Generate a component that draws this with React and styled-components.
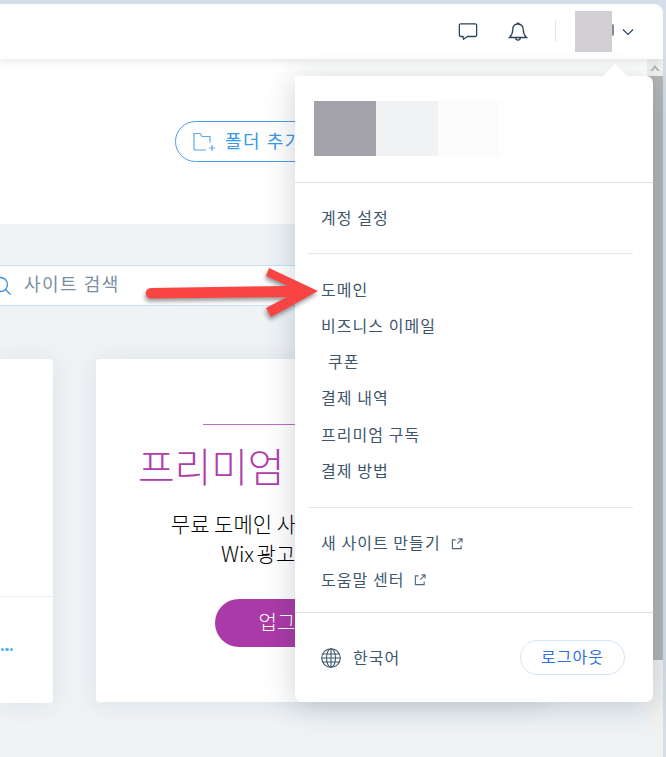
import React from "react";
import styled, { createGlobalStyle } from "styled-components";

const Global = createGlobalStyle`
  html, body { margin: 0; padding: 0; }
  * { box-sizing: border-box; }
  body { font-family: "Noto Sans CJK KR", "Noto Sans", sans-serif; }
`;

const Page = styled.div`
  position: relative; width: 666px; height: 757px; overflow: hidden;
  background: #d3dee8; padding: 4px 3px 0 0;
`;
const Win = styled.div`
  height: 753px; display: flex; flex-direction: column; background: #fff;
  border-top-right-radius: 9px; overflow: hidden;
`;
const TopBar = styled.header`
  position: relative; z-index: 2; height: 55px; flex: none; background: #fff;
  display: flex; align-items: center; justify-content: flex-end;
  box-shadow: 0 2px 8px rgba(22,45,61,.12);
`;
const IconBtn = styled.button`
  width: 24px; height: 24px; padding: 0; border: 0; background: none; display: flex;
  align-items: center; justify-content: center; margin-right: ${p => p.$mr}px; color: #2b4358;
`;
const VDiv = styled.span`width: 1px; height: 21px; background: #dfe5eb; margin-right: 19px;`;
const Avatar = styled.div`
  position: relative; width: 37px; height: 41px; background: #d3d0d5; margin-right: 10px;
  &::after {
    content: ""; position: absolute; right: -2px; top: 13px; width: 2px; height: 12px;
    border-radius: 0 6px 6px 0; background: #8a8a96;
  }
`;
const Chevron = styled.svg`width: 12px; height: 8px; margin-right: 29px;`;
const Body = styled.div`flex: 1; min-height: 0; display: flex;`;
const Main = styled.main`flex: 1; min-width: 0; overflow: hidden; display: flex; flex-direction: column;`;
const Hero = styled.section`height: 165px; flex: none; background: #fff; padding: 62px 0 0 175px;`;
const FolderBtn = styled.button`
  height: 41px; width: 190px; border: 1px solid #4a9be8; border-radius: 21px; background: #fff;
  display: flex; align-items: center; gap: 9px; padding: 0 0 3px 17px; color: #3899ec;
  font: 400 18px "Noto Sans CJK KR", sans-serif; letter-spacing: 1.5px; white-space: nowrap;
  & > svg { margin-top: 3px; }
`;
const Content = styled.section`flex: 1; background: #eff3f6; padding-top: 41px;`;
const Search = styled.div`
  width: 320px; height: 41px; background: #fff; border: solid #c6e0f5; border-width: 1px 0;
  display: flex; align-items: center; gap: 12px; padding-bottom: 5px;
  color: #7a8f9f; font-size: 18px; letter-spacing: 1.5px;
`;
const SearchIcon = styled.svg`width: 20px; height: 20px; margin: 5px 0 0 -8px; flex: none;`;
const Cards = styled.div`display: flex; gap: 43px; margin-top: 53px; align-items: flex-start;`;
const CardBase = styled.article`
  background: #fff; height: 344px; border-radius: 4px;
  box-shadow: 0 2px 26px rgba(22,45,61,.09);
`;
const SideCard = styled(CardBase)`
  width: 53px; flex: none; display: flex; flex-direction: column; border-radius: 0 4px 4px 0;
`;
const SideTop = styled.div`height: 238px; border-bottom: 1px solid #edf0f2;`;
const Dots = styled.div`display: flex; gap: 1px; justify-content: flex-end; padding: 51px 40px 0 0;`;
const Dot = styled.i`width: 3.300px; height: 3.300px; border-radius: 50%; background: #4eb7f5;`;
const PromoCard = styled(CardBase)`
  width: 448px; flex: none; display: flex; flex-direction: column; align-items: center;
  padding-top: 65px; text-align: center; white-space: nowrap; height: 343px;
`;
const Rule = styled.div`width: 234px; height: 1px; background: #c36bc3;`;
const Title = styled.h2`
  margin: 11px 0 0; font-size: 40px; font-weight: 300; line-height: 58px;
  color: #b13dac; letter-spacing: -.2px; word-spacing: 27px;
`;
const Sub = styled.p`margin: 14px 0 0; font-size: 21px; font-weight: 300; line-height: 30px; color: #000;`;
const SubSecond = styled.span`word-spacing: -2px;`;
const Upgrade = styled.button`
  margin-top: 31px; width: 210px; height: 48px; border: 0; border-radius: 24px; background: #aa3aa8;
  color: #fff; font: 300 20px "Noto Sans CJK KR", sans-serif; padding: 0 0 3px 6px;
`;
const Track = styled.aside`width: 16px; flex: none; background: #f1f1f1; display: flex; flex-direction: column;`;
const TrackBtn = styled.div`height: 17px; background: #f1f1f1; display: flex; align-items: center; justify-content: center;`;
const Thumb = styled.div`width: 100%; height: 584px; background: #b5b6b7;`;

const Popover = styled.div`
  position: absolute; z-index: 3; left: 295px; top: 76px; width: 358px; height: 626px;
  background: #fff; border-radius: 0 7px 7px 7px; display: flex; flex-direction: column;
  box-shadow: 0 4px 30px rgba(22,45,61,.22);
  &::before {
    content: ""; position: absolute; right: 27px; top: -8px; width: 22px; height: 22px;
    background: #fff; transform: rotate(45deg); box-shadow: -2px -2px 5px rgba(22,45,61,.05);
    clip-path: polygon(0 0, 100% 0, 0 100%);
  }
`;
const Masked = styled.div`
  height: 107px; flex: none; display: flex; padding: 25px 0 0 19px; border-bottom: 1px solid #dfe0e2;
`;
const Swatch = styled.div`width: ${p => p.$w}px; height: 55px; background: ${p => p.$c};`;
const Section = styled.div`
  flex: none; display: flex; flex-direction: column; padding: ${p => p.$p};
  border-bottom: ${p => p.$plain ? "0" : "1px solid #e4e6e9"}; margin: 0 20px 0 13px;
`;
const MenuItem = styled.a`
  height: ${p => p.$h || 36.2}px; display: flex; align-items: center; gap: 10px; flex: none;
  padding: 0 0 3px ${p => 13 + (p.$indent || 0)}px; color: #3d566c;
  font-size: 16px; letter-spacing: 1.050px; white-space: nowrap;
  & > svg { margin-top: 3px; }
`;
const FullLine = styled.div`height: 1px; background: #dfe0e2; flex: none;`;
const Footer = styled.div`
  flex: 1; display: flex; align-items: center; padding: 0 28px 0 26px; color: #3d566c;
  font-size: 16px; letter-spacing: 1.050px;
`;
const Lang = styled.span`margin: 0 0 2px 12px; flex: 1;`;
const Logout = styled.button`
  width: 105px; height: 35px; border-radius: 18px; border: 1px solid #d5e4fb; background: #fff;
  color: #2f6fde; font: 400 16px "Noto Sans CJK KR", sans-serif; letter-spacing: 1px; padding: 0 0 3px;
`;
const Arrow = styled.svg`
  position: absolute; z-index: 4; left: 140px; top: 262px; width: 190px; height: 60px; overflow: visible;
  filter: drop-shadow(-1px 3px 2px rgba(0,0,0,.4));
`;

const External = () => (
  <svg width="12" height="12" viewBox="0 0 13 13" fill="none" stroke="#51687c" strokeWidth="1.200">
    <path d="M5 2H1.500v9.500H11V8M7 6l5-5M8 1h4v4" />
  </svg>
);

export default function App() {
  return (
    <Page>
      <Global />
      <Win>
        <TopBar>
          <IconBtn $mr={26}>
            <svg width="20" height="19" viewBox="0 0 22 20" fill="none" stroke="currentColor" strokeWidth="1.400">
              <path d="M3 1.500h16a1.500 1.500 0 0 1 1.500 1.500v11a1.500 1.500 0 0 1-1.500 1.500H10.500L6 18.500l-.5-3H3A1.500 1.500 0 0 1 1.500 14V3A1.500 1.500 0 0 1 3 1.500z" />
            </svg>
          </IconBtn>
          <IconBtn $mr={25}>
            <svg width="20" height="22" viewBox="0 0 20 22" fill="none" stroke="currentColor" strokeWidth="1.300">
              <path d="M10 3c3.600 0 5.300 2.700 5.300 6 0 4 1.200 5.600 3.200 7.500H1.500C3.500 14.600 4.700 13 4.700 9c0-3.300 1.700-6 5.300-6zM8.700 3a1.400 1.400 0 0 1 2.600 0M7.700 16.800a2.300 2.300 0 0 0 4.600 0" />
            </svg>
          </IconBtn>
          <VDiv />
          <Avatar />
          <Chevron viewBox="0 0 12 8" fill="none" stroke="#2b4358" strokeWidth="1.200">
            <path d="M1 1.500l5 5 5-5" />
          </Chevron>
        </TopBar>
        <Body>
          <Main>
            <Hero>
              <FolderBtn>
                <svg width="23" height="20" viewBox="0 0 23 20" fill="none" stroke="#5aa9ee" strokeWidth="1.200">
                  <path d="M1 18V1.500h6l2 3h8v6M13 18H1M19 13v6M16 16h6" />
                </svg>
                폴더 추가
              </FolderBtn>
            </Hero>
            <Content>
              <Search>
                <SearchIcon viewBox="0 0 20 20" fill="none" stroke="#3f8fd6" strokeWidth="1.300">
                  <circle cx="8.500" cy="8.500" r="7" />
                  <path d="M13.500 13.500l5 5" />
                </SearchIcon>
                사이트 검색
              </Search>
              <Cards>
                <SideCard>
                  <SideTop />
                  <Dots><Dot /><Dot /><Dot /></Dots>
                </SideCard>
                <PromoCard>
                  <Rule />
                  <Title>프리미엄 플랜 구독</Title>
                  <Sub>무료 도메인 사용 및 저장 공간 추가<br /><SubSecond>Wix 광고 제거 및 혜택도</SubSecond></Sub>
                  <Upgrade>업그레이드하기</Upgrade>
                </PromoCard>
              </Cards>
            </Content>
          </Main>
          <Track>
            <TrackBtn>
              <svg width="10" height="6" viewBox="0 0 10 6"><path d="M0 6l5-6 5 6H7.500L5 3 2.500 6z" fill="#b5b6b7" /></svg>
            </TrackBtn>
            <Thumb />
          </Track>
        </Body>
      </Win>

      <Popover>
        <Masked>
          <Swatch $w={62} $c="#a3a1aa" />
          <Swatch $w={62} $c="#f1f2f4" />
          <Swatch $w={61} $c="#fbfbfb" />
          <Swatch $w={40} $c="#fefefe" />
        </Masked>
        <Section $p="17px 0">
          <MenuItem>계정 설정</MenuItem>
        </Section>
        <Section $p="18px 0 18px">
          <MenuItem>도메인</MenuItem>
          <MenuItem>비즈니스 이메일</MenuItem>
          <MenuItem $indent={7}>쿠폰</MenuItem>
          <MenuItem>결제 내역</MenuItem>
          <MenuItem>프리미엄 구독</MenuItem>
          <MenuItem>결제 방법</MenuItem>
        </Section>
        <Section $p="17px 0 14px" $plain>
          <MenuItem $h={36.5}>새 사이트 만들기 <External /></MenuItem>
          <MenuItem $h={36.5}>도움말 센터 <External /></MenuItem>
        </Section>
        <FullLine />
        <Footer>
          <svg width="20" height="20" viewBox="0 0 20 20" fill="none" stroke="#3d566c" strokeWidth="1.100">
            <circle cx="10" cy="10" r="9.300" />
            <ellipse cx="10" cy="10" rx="4.500" ry="9.300" />
            <path d="M10 .7v18.600M1.800 6h16.400M1.800 14h16.400M.7 10h18.600" />
          </svg>
          <Lang>한국어</Lang>
          <Logout>로그아웃</Logout>
        </Footer>
      </Popover>

      <Arrow viewBox="0 0 190 60">
        <path d="M11 26L148 24L126 14L129 6L178 29L131 55L126 46L147 35L11 36.500a5.200 5.200 0 0 1 0-10.500z" fill="#f94444" />
      </Arrow>
    </Page>
  );
}
